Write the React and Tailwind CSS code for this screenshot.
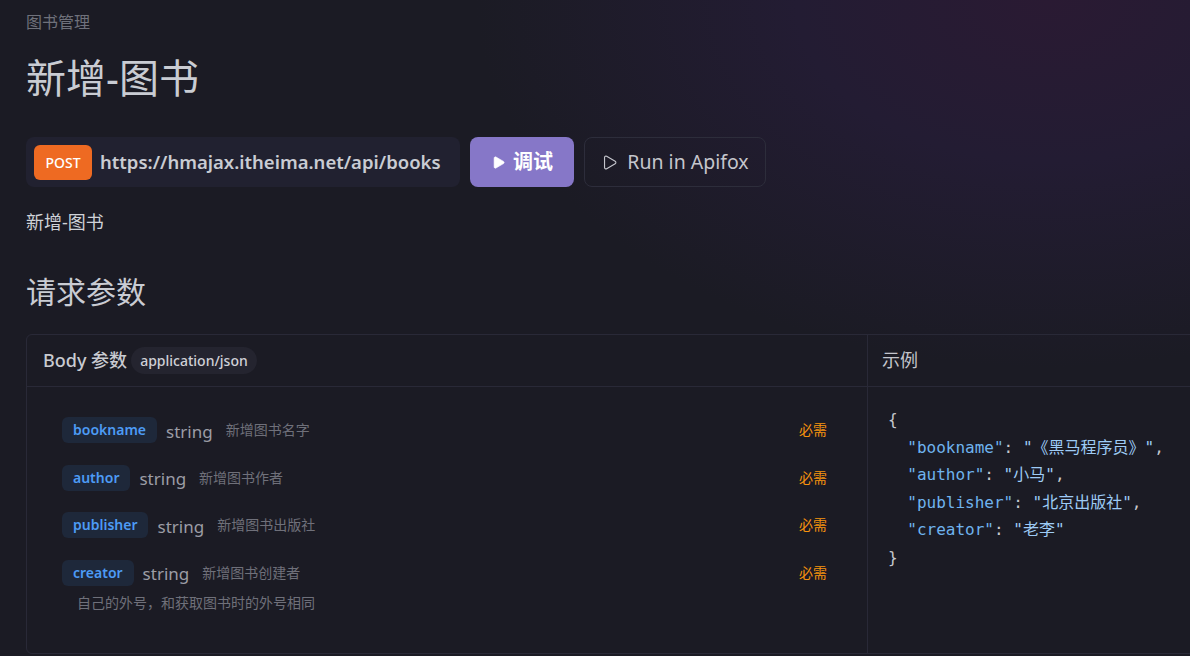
import { Play } from 'lucide-react';

const params = [
  { name: 'bookname', desc: '新增图书名字' },
  { name: 'author', desc: '新增图书作者' },
  { name: 'publisher', desc: '新增图书出版社' },
  { name: 'creator', desc: '新增图书创建者', note: '自己的外号，和获取图书时的外号相同' },
];

const example = [
  ['bookname', '《黑马程序员》', true],
  ['author', '小马', true],
  ['publisher', '北京出版社', true],
  ['creator', '老李', false],
];

export default function App() {
  return (
    <div className="w-[1190px] h-[656px] overflow-hidden bg-[#1b1b24] font-['Noto_Sans','Noto_Sans_CJK_SC',sans-serif]">
      <div className="h-full bg-[radial-gradient(ellipse_60%_70%_at_88%_0%,#2a1a33_0%,#231c33_35%,transparent_80%)] pl-[26px] pt-[10px]">
        <div className="text-[16px] leading-[24px] text-[#6f717b]">图书管理</div>
        <h1 className="mt-[20px] text-[40px] leading-[48px] text-[#c9ccd3]">新增-图书</h1>

        <div className="mt-[35px] flex items-center gap-[10px]">
          <div className="flex h-[50px] w-[434px] items-center gap-[8px] rounded-[8px] bg-[#212130] pl-[8px]">
            <span className="flex h-[35px] w-[58px] items-center justify-center rounded-[6px] bg-[#ee6a22] text-[14px] font-medium text-white">POST</span>
            <span className="text-[18.5px] font-semibold text-[#c9ccd3]">https://hmajax.itheima.net/api/books</span>
          </div>
          <button className="flex h-[50px] w-[104px] items-center justify-center gap-[7px] rounded-[8px] bg-[#8677c8] text-[20px] font-semibold text-white">
            <Play className="h-[15px] w-[15px]" fill="white" strokeWidth={1} />
            调试
          </button>
          <button className="flex h-[50px] w-[182px] items-center justify-center gap-[9px] rounded-[8px] border border-[#2d2d3b] text-[19.5px] text-[#c5c6cd]">
            <Play className="h-[17px] w-[17px]" strokeWidth={1.6} />
            Run in Apifox
          </button>
        </div>

        <div className="mt-[22px] text-[18px] leading-[26px] text-[#cfd2d8]">新增-图书</div>
        <h2 className="mt-[37px] text-[30px] leading-[40px] text-[#c9ccd3]">请求参数</h2>

        <div className="mt-[22px] flex h-[320px] w-[1200px] rounded-[6px] border border-[#292937]">
          <div className="flex w-[841px] flex-col border-r border-[#292937]">
            <div className="flex h-[52px] items-center gap-[4px] border-b border-[#292937] pl-[16px]">
              <span className="text-[18px] font-medium text-[#c9cbd1]">Body 参数</span>
              <span className="flex h-[27px] items-center rounded-full bg-[#24242f] px-[9px] text-[14px] font-medium text-[#d0d1d7]">application/json</span>
            </div>
            <div className="flex flex-col gap-[21.6px] pl-[35px] pr-[40px] pt-[30px]">
              {params.map((p) => (
                <div key={p.name}>
                  <div className="flex h-[26px] items-center leading-[26px]">
                    <span className="flex h-[26px] items-center rounded-[6px] bg-[#1e283a] px-[11px] text-[14px] font-semibold text-[#4d9bf5]">{p.name}</span>
                    <span className="ml-[9px] mt-[3px] text-[17px] text-[#9c9da6]">string</span>
                    <span className="ml-[13px] text-[14px] text-[#6f707a]">{p.desc}</span>
                    <span className="ml-auto text-[14px] text-[#f7930e]">必需</span>
                  </div>
                  {p.note && (
                    <div className="ml-[15px] mt-[7px] text-[14px] leading-[20px] text-[#6f707a]">{p.note}</div>
                  )}
                </div>
              ))}
            </div>
          </div>
          <div className="flex flex-1 flex-col">
            <div className="flex h-[52px] items-center border-b border-[#292937] pl-[14px] text-[18px] text-[#c3c5cc]">示例</div>
            <pre className="whitespace-pre pl-[20px] pt-[19px] font-['DejaVu_Sans_Mono','Noto_Sans_CJK_SC',monospace] text-[16px] leading-[27.5px] text-[#c6c8ce]">
              {'{\n'}
              {example.map(([k, v, comma]) => (
                <span key={k}>
                  {'  '}
                  <span className="text-[#6fb3ee]">"{k}"</span>
                  {': '}
                  <span className="text-[#9ecbf5]">"{v}"</span>
                  {comma ? ',' : ''}
                  {'\n'}
                </span>
              ))}
              {'}'}
            </pre>
          </div>
        </div>
      </div>
    </div>
  );
}
